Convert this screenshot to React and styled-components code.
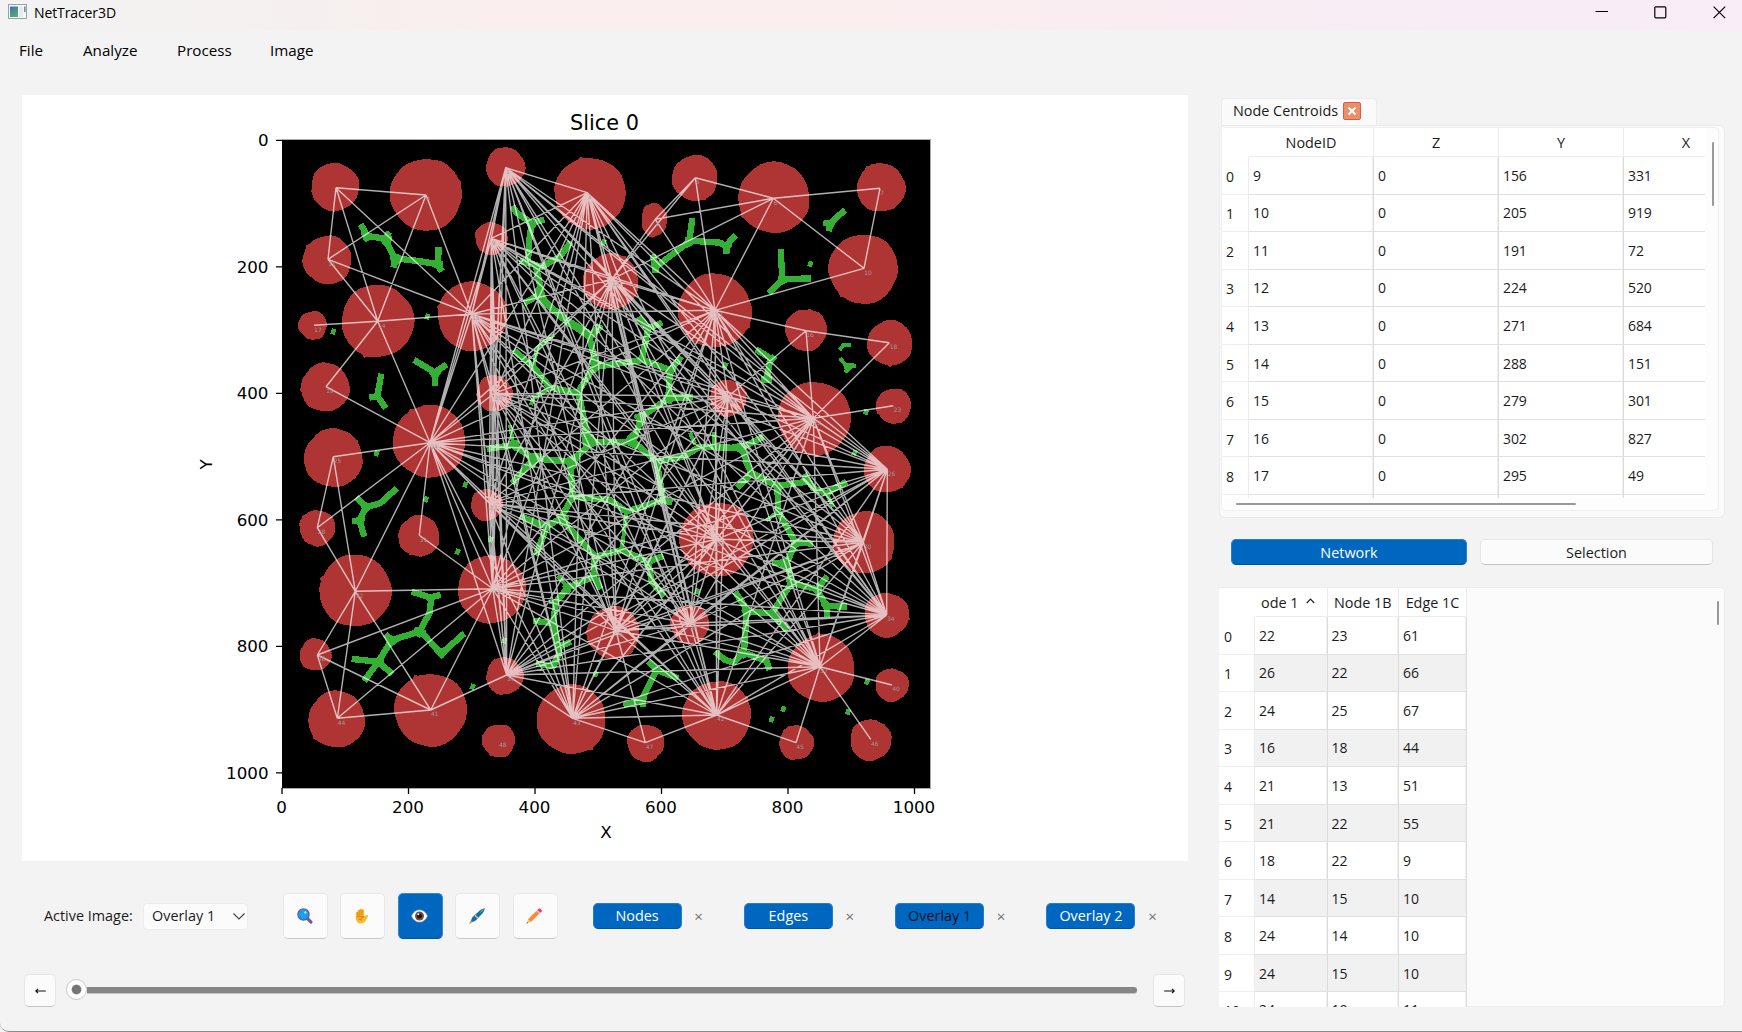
import React from "react";
import styled, { createGlobalStyle } from "styled-components";

const GlobalStyle = createGlobalStyle`
  html, body { margin: 0; padding: 0; background: #f3f3f3; }
  * { box-sizing: border-box; }
`;

/* ---------- window chrome ---------- */

const Window = styled.div`
  width: 1742px;
  height: 1032px;
  overflow: hidden;
  display: flex;
  flex-direction: column;
  background: #f3f3f3;
  border-bottom: 1px solid #8a8a8a;
  border-bottom-left-radius: 9px;
  color: #1b1b1b;
  font-family: "Open Sans", "Noto Sans", sans-serif;
  font-size: 14.4px;
  line-height: 20px;
  white-space: nowrap;
`;

const TitleBar = styled.header`
  height: 31px;
  flex: none;
  display: flex;
  align-items: flex-start;
  padding: 3px 16px 0 8px;
  background: linear-gradient(90deg, #f3f3f3 0%, #f5f0ef 18%, #fbeeee 30%, #faeeef 50%, #f8ecf6 85%, #f7eef7 100%);
`;

const AppTitle = styled.h1`
  margin: 0 auto 0 7px;
  font-size: 14px;
  line-height: 19px;
  letter-spacing: -0.1px;
  font-weight: 400;
  color: #000;
`;

const WindowControls = styled.div`
  display: flex;
  gap: 46px;
  padding-top: 3px;
  svg { display: block; }
`;

const MenuBar = styled.nav`
  height: 64px;
  flex: none;
  display: flex;
  padding: 9px 0 0 19px;
  color: #000;
  font-size: 15.2px;
`;

const MenuItem = styled.span`
  width: ${(p) => p.$w}px;
`;

const Body = styled.main`
  display: flex;
  flex: 1;
  min-height: 0;
`;

/* ---------- left column ---------- */

const Left = styled.section`
  width: 1219px;
  flex: none;
  padding-left: 22px;
`;

const Figure = styled.div`
  width: 1166px;
  height: 766px;
  background: #fff;
  svg { display: block; }
`;

const Controls = styled.div`
  display: flex;
  align-items: center;
  height: 46px;
  margin-top: 32px;
  padding-left: 22px;
`;

const Label = styled.label`
  width: 99px;
`;

const Select = styled.div`
  width: 105px;
  height: 27px;
  display: flex;
  align-items: center;
  justify-content: space-between;
  padding: 0 1px 0 8px;
  background: #fbfbfb;
  border: 1px solid #ececec;
  border-radius: 4px;
`;

const Tools = styled.div`
  display: flex;
  gap: 12.4px;
  margin: 0 35px 0 35px;
`;

const ToolButton = styled.button`
  width: 45px;
  height: 46px;
  padding: 0 1px 0 0;
  display: flex;
  align-items: center;
  justify-content: center;
  border-radius: 5px;
  border: 1px solid ${(p) => (p.$active ? "#3a86cc" : "#e8e8e8")};
  border-bottom-color: ${(p) => (p.$active ? "#00539f" : "#c9c9c9")};
  background: ${(p) => (p.$active ? "#0067c0" : "#fbfbfb")};
`;

const Channels = styled.div`
  display: flex;
`;

const Channel = styled.div`
  display: flex;
  align-items: center;
  width: 151.3px;
`;

const ChannelButton = styled.button`
  width: 89px;
  height: 26px;
  padding: 0;
  border: 1px solid #2a7cc8;
  border-bottom-color: #00539f;
  border-radius: 5px;
  background: #0067c0;
  color: ${(p) => (p.$dark ? "#0a1420" : "#fff")};
  font: inherit;
`;

const CloseGlyph = styled.span`
  width: 34px;
  text-align: center;
  font-size: 15px;
  color: #707070;
`;

const SliderRow = styled.div`
  display: flex;
  align-items: center;
  height: 34px;
  margin-top: 34px;
  padding-left: 2px;
`;

const StepButton = styled.button`
  width: 32px;
  height: 33px;
  padding: 0;
  display: flex;
  align-items: center;
  justify-content: center;
  border: 1px solid #e6e6e6;
  border-bottom-color: #c2c2c2;
  border-radius: 5px;
  background: #fbfbfb;
`;

const Slider = styled.div`
  display: flex;
  align-items: center;
  width: 1071px;
  margin: 0 16px 1px 10px;
`;

const Handle = styled.div`
  width: 21px;
  height: 21px;
  flex: none;
  border-radius: 50%;
  border: 1px solid #c9c9c9;
  background: radial-gradient(circle, #767676 0 4.2px, #fff 5.4px);
`;

const Track = styled.div`
  flex: 1;
  height: 6px;
  border-radius: 0 3px 3px 0;
  background: #868686;
  box-shadow: 0 1px 0 #c4c4c4;
`;

/* ---------- right column ---------- */

const Right = styled.section`
  width: 506px;
  padding-top: 3px;
  flex: none;
`;

const Tab = styled.div`
  width: 156px;
  height: 27px;
  margin-left: 2px;
  display: flex;
  align-items: center;
  justify-content: space-between;
  padding: 0 15px 3px 11px;
  border: 1px solid #ececec;
  border-bottom: 0;
  border-radius: 4px 4px 0 0;
  background: #fafafa;
`;

const TabClose = styled.button`
  width: 18px;
  height: 18px;
  padding: 0;
  display: flex;
  align-items: center;
  justify-content: center;
  border: 1px solid #e2574c;
  border-radius: 2px;
  background: #ea8f66;
`;

const CentroidPanel = styled.div`
  height: 393px;
  padding: 1px 5px 6px 1px;
  border: 1px solid #ebebeb;
  border-radius: 6px;
  background: #fafafa;
`;

const CentroidFrame = styled.div`
  height: 384px;
  display: grid;
  grid-template-columns: 484px 1fr;
  grid-template-rows: 370px 1fr;
  border: 1px solid #efefef;
  border-radius: 4px;
  background: #fdfdfd;
`;

const Table = styled.div`
  width: ${(p) => p.$w}px;
  height: ${(p) => p.$h}px;
  overflow: hidden;
  background: #fff;
`;

const Row = styled.div`
  display: grid;
  grid-template-columns: ${(p) => p.$cols};
  height: ${(p) => (p.$header ? 29 : 37.55)}px;
  flex: none;
`;

const HeadCell = styled.div`
  display: flex;
  align-items: center;
  justify-content: ${(p) => (p.$start ? "flex-start" : "center")};
  padding: 1px 0 0 ${(p) => p.$pad || 0}px;
  border-right: 1px solid ${(p) => (p.$corner ? "transparent" : "#ececec")};
  border-bottom: 1px solid ${(p) => (p.$corner ? "transparent" : "#ececec")};
  svg { margin: 0 0 4px 7px; }
`;

const IndexCell = styled.div`
  display: flex;
  align-items: center;
  padding: ${(p) => (p.$cut ? 0 : 3)}px 0 0 ${(p) => p.$pad}px;
  font-size: 14px;
  border-right: 1px solid #ececec;
  border-bottom: 1px solid #efefef;
`;

const Cell = styled.div`
  display: flex;
  align-items: center;
  padding: ${(p) => (p.$cut ? 0 : 1)}px 0 ${(p) => (p.$cut ? 1 : 0)}px 4px;
  font-size: 14px;
  letter-spacing: -0.1px;
  background: ${(p) => (p.$alt ? "#f1f1f1" : "#fff")};
  border-right: 1px solid #dcdcdc;
  border-bottom: 1px solid #e0e0e0;
  box-shadow: inset -1px 0 0 #f0f0f0;
`;

const VScroll = styled.div`
  width: 2px;
  height: ${(p) => p.$h}px;
  margin: ${(p) => p.$m};
  border-radius: 1px;
  background: #999;
`;

const HScroll = styled.div`
  width: 340px;
  height: 2px;
  margin: 5px 0 0 14px;
  border-radius: 1px;
  background: #999;
`;

const Switch = styled.div`
  display: flex;
  gap: 13px;
  margin: 21px 0 22px 12px;
`;

const SwitchButton = styled.button`
  width: ${(p) => (p.$active ? 236 : 233)}px;
  height: 26px;
  padding: 1px 0 0;
  font: inherit;
  border-radius: 5px;
  border: 1px solid ${(p) => (p.$active ? "#2a7cc8" : "#e6e6e6")};
  border-bottom-color: ${(p) => (p.$active ? "#00539f" : "#c4c4c4")};
  background: ${(p) => (p.$active ? "#0067c0" : "#fbfbfb")};
  color: ${(p) => (p.$active ? "#fff" : "#1b1b1b")};
`;

const NetworkPanel = styled.div`
  height: 420px;
  display: flex;
  justify-content: space-between;
  border: 1px solid #ececec;
  border-left: 0;
  border-radius: 0 5px 5px 0;
  background: #fbfbfb;
`;

/* ---------- plot data ---------- */

// The plot is digitised in four quadrants, each at a third of a pixel
const A = (x, y) => [270 + x / 3, 130 + y / 3];
const B = (x, y) => [600 + x / 3, 130 + y / 3];
const C = (x, y) => [270 + x / 3, 460 + y / 3];
const D = (x, y) => [600 + x / 3, 460 + y / 3];

// id: [hub position, disc centre, disc radius in thirds of a pixel]
const NODES = {
  1: [A(707, 113), A(706, 111), 58],
  2: [A(198, 173), A(195, 171), 71],
  3: [A(952, 188), A(960, 190), 106],
  4: [A(468, 195), A(468, 194), 107],
  5: [B(286, 143), B(285, 144), 68],
  6: [B(520, 205), B(522, 203), 106],
  7: [B(840, 175), B(843, 173), 72],
  8: [B(166, 268), B(162, 270), 43],
  9: [A(664, 325), A(664, 325), 48],
  10: [B(792, 415), B(790, 417), 103],
  11: [A(174, 388), A(172, 390), 72],
  12: [A(1025, 448), A(1022, 455), 83],
  13: [B(345, 541), B(344, 542), 110],
  14: [A(323, 574), A(323, 573), 108],
  15: [A(605, 552), A(607, 558), 103],
  16: [B(618, 602), B(618, 600), 62],
  17: [A(132, 586), A(128, 586), 42],
  18: [B(868, 638), B(870, 639), 67],
  19: [A(168, 770), A(166, 772), 72],
  20: [A(673, 790), A(673, 790), 53],
  21: [B(384, 800), B(384, 804), 54],
  22: [B(640, 865), B(643, 865), 109],
  23: [B(880, 827), B(881, 828), 52],
  24: [A(480, 938), A(478, 934), 108],
  25: [A(190, 980), A(190, 984), 87],
  26: [D(862, 28), D(861, 28), 69],
  27: [C(658, 130), C(650, 135), 47],
  28: [C(142, 203), C(142, 204), 53],
  29: [D(350, 238), D(350, 238), 110],
  30: [D(790, 247), D(792, 247), 92],
  31: [C(448, 226), C(447, 228), 61],
  32: [C(256, 394), C(256, 392), 107],
  33: [C(668, 386), C(665, 388), 101],
  34: [D(860, 465), D(860, 465), 66],
  35: [D(270, 490), D(270, 494), 57],
  36: [D(48, 512), D(40, 518), 78],
  37: [D(660, 620), D(664, 625), 100],
  38: [C(142, 585), C(136, 584), 47],
  39: [C(710, 645), C(704, 648), 55],
  40: [D(876, 675), D(876, 675), 49],
  41: [C(482, 750), C(482, 750), 108],
  42: [D(350, 765), D(351, 766), 102],
  43: [C(908, 775), C(904, 778), 103],
  44: [C(202, 775), C(200, 778), 84],
  45: [D(588, 848), D(589, 848), 51],
  46: [D(812, 838), D(812, 840), 61],
  47: [D(136, 848), D(137, 849), 55],
  48: [C(686, 842), C(686, 842), 49],
};

const CORE = [1, 3, 9, 12, 13, 15, 20, 21, 22, 24, 26, 27, 29, 30, 33, 34, 35, 36, 37, 39, 42, 43];

const OUTER = [
  [2, 4], [2, 11], [2, 14], [2, 15], [4, 11], [4, 14], [4, 15], [11, 14], [11, 15], [14, 17], [14, 15],
  [14, 19], [14, 24], [19, 24], [24, 25], [25, 28], [25, 32], [24, 28], [28, 32], [24, 32], [24, 31],
  [31, 33], [32, 33], [32, 38], [32, 41], [32, 44], [38, 44], [38, 41], [33, 38], [33, 44], [33, 41],
  [41, 44], [39, 41], [43, 47], [42, 47], [36, 47], [42, 45], [37, 45], [37, 46], [37, 40], [5, 6],
  [5, 8], [5, 13], [5, 12], [6, 8], [6, 12], [6, 13], [6, 10], [6, 7], [7, 10], [8, 13], [8, 12],
  [10, 13], [13, 16], [16, 18], [18, 22], [16, 22], [16, 21], [22, 23],
];

const seg = ([a, b]) => {
  const [p, q] = [NODES[a][0], NODES[b][0]];
  return `M${p[0].toFixed(1)},${p[1].toFixed(1)}L${q[0].toFixed(1)},${q[1].toFixed(1)}`;
};

const CORE_EDGES = CORE.flatMap((a, i) => CORE.slice(i + 1).map((b) => [a, b]));
const EDGE_PATH = [...OUTER, ...CORE_EDGES].map(seg).join("");

// Slightly irregular outline with a single small nub, like a segmented blob
const blob = (id, [cx, cy], r3) => {
  const r = r3 / 3;
  const n = 72;
  const nub = (id * 17) % n;
  const pts = [];
  for (let i = 0; i < n; i++) {
    const t = (i / n) * Math.PI * 2;
    let k = r + 0.3 + 0.5 * Math.sin(t * 3 + id) + 0.3 * Math.sin(t * 6 + id * 2) + 0.12 * Math.sin(t * 11 + id * 5);
    if (i === nub) k += r * 0.06;
    const squash = id === 8 ? [0.88, 1.16] : [1, 1];
    pts.push(`${(cx + k * Math.cos(t) * squash[0]).toFixed(1)},${(cy + k * Math.sin(t) * squash[1]).toFixed(1)}`);
  }
  return pts.join(" ");
};

const GREEN = [
  {
    at: [270, 130],
    wide:
      "M272,283L292,318L345,326L358,306M345,326L376,390L370,412M376,385L445,393L500,402L516,424M504,405L506,350M726,228L740,248L785,280L823,268M785,280L778,330L774,395M748,392L815,410L870,380L903,335M798,410L815,490L762,520M805,500L890,570L965,615L993,587M432,690L495,728L495,768M493,728L530,703M334,731L322,798L298,803M320,795L347,835",
    fat: "M280,308L300,322L288,328ZM335,325L360,325L350,345ZM368,375L395,385L370,405ZM485,400L512,400L512,415ZM485,728L505,728L495,742ZM775,275L795,278L785,295ZM800,480L815,505L835,520Z",
    dots: [[190, 605], [472, 560], [320, 970], [1001, 337]],
  },
  {
    at: [600, 130],
    wide:
      "M277,264L268,332L360,338L378,348L407,315M378,345L380,371M268,335L168,410L158,373M166,400L166,428M735,240L690,280L670,278M690,280L687,304M542,358L547,448L633,445M550,446L506,490M468,658L512,685L498,755M525,678L505,700M484,748L515,748M300,950L420,955L490,920M425,955L450,1020",
    thin: "M718,660L730,646L752,646M720,684L742,712L768,707M744,706L738,728M270,908L285,942M343,905L343,945",
    fat: "M262,328L280,335L262,345ZM368,345L390,345L380,358ZM160,402L178,405L166,418ZM680,280L698,280L688,295ZM540,445L560,450L540,460ZM400,950L430,945L430,965ZM738,705L755,705L742,718Z",
    dots: [[631, 402], [375, 705], [798, 846], [764, 968], [0, 593]],
  },
  {
    at: [470, 300],
    wide:
      "M215,0L290,65L360,110L390,75M356,105L378,190L325,275L350,400L375,425L490,425L515,350L595,295L600,210L635,170M595,293L668,292M600,210L520,180L380,200M515,180L535,85L505,50M535,85L577,68M130,150L190,200L240,262L325,280M50,447L130,435L190,475L300,485L370,425M190,478L125,550M300,475L308,590L420,600L470,635L580,600L607,608M490,425L560,485L580,600M555,485L640,470L690,440L780,440M308,590L272,655L230,680L198,766M230,680L150,648M272,655L375,770L455,750M455,750L535,785L580,768M535,785L545,845L583,888M375,770L370,830L295,862L258,905M372,830L392,868M258,900L250,970L190,962M250,970L258,1020",
    thin:
      "M190,210L200,145L250,105M240,265L190,295L183,316M130,435L120,375M470,635L455,750M295,862L262,828M258,905L236,905",
    fat: "M340,400L378,428L348,442ZM468,425L490,402L499,440ZM288,482L325,465L310,500ZM180,465L208,465L188,498ZM500,350L525,340L515,370ZM590,290L612,285L600,305ZM590,205L612,205L600,225ZM265,650L290,655L275,670ZM525,780L545,780L535,800ZM285,860L300,855L295,872ZM120,430L140,428L135,445ZM365,185L390,190L375,210Z",
    dots: [[62, 718], [683, 874], [766, 196]],
  },
  {
    at: [270, 460],
    wide:
      "M380,85L330,130L288,142L258,112M288,140L268,182L245,182M268,180L283,230M425,395L480,412L512,405M485,410L478,460L448,515L365,540L346,522M448,512L515,580L583,520M368,535L325,605L245,597M325,605L282,663M320,600L367,643M850,480L868,580L850,618L798,610M868,560L903,545",
    fat: "M278,130L298,138L285,152ZM262,178L278,178L270,190ZM472,408L492,408L482,422ZM440,508L460,515L448,525ZM500,572L528,572L515,588ZM355,535L380,540L360,555ZM312,600L336,600L322,615Z",
    dots: [[468, 118], [586, 74], [563, 275], [608, 680], [703, 542], [977, 642]],
  },
  {
    at: [600, 460],
    wide:
      "M435,0L455,40L412,84M455,38L530,78L622,65M612,42L640,85L680,100L740,65M532,75L535,155L585,245L640,252M588,245L560,310L515,308M560,300L575,368L650,388L682,348M650,388L680,438L742,440M680,435L680,470M575,368L515,460L445,455L405,395M510,455L562,510M440,455L432,578L400,607L375,600L345,575M432,578L500,603L508,630M145,605L170,630L235,655M168,632L125,720L70,735M128,710L128,742",
    thin: "M535,155L498,182M680,100L700,140",
    fat: "M448,35L465,42L448,50ZM524,72L544,78L534,92ZM578,240L600,248L582,260ZM535,308L562,300L562,325ZM566,362L590,370L572,380ZM640,385L660,385L655,398ZM670,432L692,436L680,448ZM432,452L455,455L440,470ZM422,575L444,580L430,588ZM110,722L134,710L130,732Z",
    dots: [[292, 394], [550, 747], [515, 778], [744, 756], [801, 665]],
  },
];

const TICKS = [0, 200, 400, 600, 800, 1000];
const scale = (v) => (v * 648) / 1024.5;

function Plot() {
  return (
    <svg width="1166" height="766" viewBox="22 95 1166 766">
      <rect x="282" y="139.5" width="648.5" height="649" fill="#000" />
      <path d="M282,139.5H930.5V788.5H282" fill="none" stroke="#aaa" />
      <g fill="#af3434" shapeRendering="crispEdges">
        {Object.entries(NODES).map(([id, n]) => (
          <polygon key={id} points={blob(Number(id), n[1], n[2])} />
        ))}
      </g>
      <g fill="none" stroke="#34b034" shapeRendering="crispEdges" strokeLinejoin="round">
        {GREEN.map((g, i) => (
          <g key={i} transform={`translate(${g.at[0]} ${g.at[1]}) scale(${1 / 3})`}>
            <path d={g.wide} strokeWidth="19" />
            {g.thin && <path d={g.thin} strokeWidth="12" />}
            {g.fat && <path d={g.fat} strokeWidth="15" fill="#34b034" />}
            {g.dots.map(([x, y], k) => (
              <path key={k} d={`M${x - 3},${y + 8}L${x + 3},${y - 8}`} strokeWidth="14" />
            ))}
          </g>
        ))}
      </g>
      <path d={EDGE_PATH} stroke="#fff" strokeWidth="1.4" opacity="0.69" fill="none" />
      <g fill="#a09a9a" fontFamily="'DejaVu Sans', sans-serif" fontSize="6">
        {Object.entries(NODES).map(([id, n]) => (
          <text key={id} x={n[0][0] + 0.3} y={n[0][1] + 6.2}>
            {id}
          </text>
        ))}
      </g>
      <g stroke="#000" strokeWidth="1.3">
        {TICKS.map((t) => (
          <path key={t} d={`M${282 + scale(t)},788v6M282,${140.4 + scale(t)}h-6`} />
        ))}
      </g>
      <g fill="#000" fontFamily="'DejaVu Sans', sans-serif" fontSize="16.7">
        {TICKS.map((t) => (
          <React.Fragment key={t}>
            <text x={281.5 + scale(t)} y="813" textAnchor="middle">
              {t}
            </text>
            <text x="268.5" y={146 + scale(t)} textAnchor="end">
              {t}
            </text>
          </React.Fragment>
        ))}
        <text x="606" y="838" textAnchor="middle">
          X
        </text>
        <text transform="translate(212 464.5) rotate(-90)" textAnchor="middle">
          Y
        </text>
        <text x="604.5" y="130" textAnchor="middle" fontSize="20.8">
          Slice 0
        </text>
      </g>
    </svg>
  );
}

/* ---------- icons ---------- */

const AppIcon = () => (
  <svg width="19" height="16" viewBox="0 0 19 16">
    <defs>
      <linearGradient id="pane" x1="0" y1="0" x2="0.6" y2="1">
        <stop offset="0" stopColor="#3f74a8" />
        <stop offset="1" stopColor="#55a877" />
      </linearGradient>
    </defs>
    <rect x="0.5" y="1.5" width="18" height="14" fill="#f6f8f9" stroke="#9aa0a8" />
    <rect x="2" y="3.5" width="8" height="10.5" fill="url(#pane)" />
    <rect x="11" y="3.5" width="4" height="10.5" fill="#e6eaec" />
    <rect x="16" y="3.5" width="1.6" height="5.5" fill="#5b9aa6" />
  </svg>
);

const Magnifier = () => (
  <svg width="16" height="16" viewBox="0 0 16 16">
    <path d="M9.6 9.6l4.3 4.4" stroke="#6a57a0" strokeWidth="3.2" strokeLinecap="round" />
    <circle cx="6.5" cy="6.5" r="5.6" fill="#11a3ee" stroke="#6a57a0" strokeWidth="1.3" />
    <circle cx="8.4" cy="4.5" r="1.2" fill="#a9e2ff" />
  </svg>
);

const Hand = () => (
  <svg width="16" height="16" viewBox="0 0 16 16">
    <path
      d="M1.8 6V4.4Q2.6 3 3.7 4.2V2.2Q4.8.8 5.9 2V1Q7 0 8 1V1.6Q9.2.6 10.2 1.9V8.3L12.3 7.2Q14 6.8 14.2 8L11.5 13Q9.8 15.6 7.2 15.6Q1.9 15.6 1.8 10Z"
      fill="#fcb92c"
    />
    <path d="M3.8 3.8v4.2M5.9 2v5.6M8 2v5.6M2.6 8.7h7.3Q7 9.6 6.3 12.2M4.5 11.2q2-.2 3.2 1.2" fill="none" stroke="#cf7a12" strokeWidth=".9" />
  </svg>
);

const Eye = () => (
  <svg width="17" height="16" viewBox="0 0 17 16">
    <path d="M.6 8Q3.4 2 8.5 2T16.4 8Q13.6 14 8.5 14T.6 8Z" fill="#fff" stroke="#c9c5c9" strokeWidth=".6" />
    <circle cx="8.5" cy="8" r="4.5" fill="#7b4a3f" />
    <circle cx="8.5" cy="8" r="2.5" fill="#1d1418" />
    <circle cx="7.3" cy="6.2" r="1" fill="#fff" />
  </svg>
);

const Pen = () => (
  <svg width="16" height="16" viewBox="0 0 16 16">
    <path d="M.6 15.4L3.4 9.2 11 2.3Q14.4-.2 15.6.6 16 2 13.6 5.2L6.8 12.6Z" fill="#0b72b9" />
    <path d="M5.9 7.2l3 3" stroke="#f6c13a" strokeWidth="1.5" />
    <path d="M.5 15.5l2.6-2.4" stroke="#e4a62c" strokeWidth="1.1" />
    <path d="M11.3 4.2l3.3-2.7" stroke="#f6c13a" strokeWidth=".8" />
  </svg>
);

const Pencil = () => (
  <svg width="17" height="16" viewBox="0 0 17 16">
    <path d="M.6 15.4L2 11.2 4.9 14Z" fill="#e9c58f" />
    <path d="M2 11.2L10.6 2.7 13.5 5.5 4.9 14Z" fill="#fd8a33" />
    <path d="M10.2 3.1L11.4 1.9 14.3 4.7 13.1 5.9Z" fill="#cfc9cf" />
    <path d="M11.4 1.9L12.6.7Q13.5.1 14.3.8L15.6 2Q16.3 2.9 15.6 3.6L14.3 4.7Z" fill="#f8316b" />
    <path d="M.5 15.5l.6-1.6 1 1Z" fill="#444" />
  </svg>
);

const Arrow = ({ flip }) => (
  <svg width="11" height="8" viewBox="0 0 11 8" transform={flip ? "scale(-1 1)" : undefined}>
    <path d="M.8 5h10M3 2.8L.8 5 3 7.2" fill="none" stroke="#111" strokeWidth="1.15" />
  </svg>
);

/* ---------- tables ---------- */

const CENTROIDS = [
  [9, 0, 156, 331],
  [10, 0, 205, 919],
  [11, 0, 191, 72],
  [12, 0, 224, 520],
  [13, 0, 271, 684],
  [14, 0, 288, 151],
  [15, 0, 279, 301],
  [16, 0, 302, 827],
  [17, 0, 295, 49],
  ["", "", "", ""],
];

const NETWORK = [
  [22, 23, 61],
  [26, 22, 66],
  [24, 25, 67],
  [16, 18, 44],
  [21, 13, 51],
  [21, 22, 55],
  [18, 22, 9],
  [14, 15, 10],
  [24, 14, 10],
  [24, 15, 10],
  [24, 19, 11],
];

const COLS_A = "27px 125px 125px 125px 125px";
const COLS_B = "36px 72.5px 71.5px 68px";

const TOOLS = [
  { name: "zoom", icon: <Magnifier /> },
  { name: "pan", icon: <Hand /> },
  { name: "view", icon: <Eye />, active: true },
  { name: "brush", icon: <Pen /> },
  { name: "edit", icon: <Pencil /> },
];

const MENU = [["File", 64], ["Analyze", 94], ["Process", 93], ["Image", 60]];

export default function App() {
  return (
    <>
      <GlobalStyle />
      <Window>
        <TitleBar>
          <AppIcon />
          <AppTitle>NetTracer3D</AppTitle>
          <WindowControls>
            <svg width="13" height="13">
              <path d="M.5 5.5h12.5" stroke="#000" />
            </svg>
            <svg width="13" height="13">
              <rect x=".8" y=".8" width="11" height="11" rx="1" fill="none" stroke="#000" strokeWidth="1.2" />
            </svg>
            <svg width="13" height="13">
              <path d="M.6 .6l11.6 11.6M12.2 .6L.6 12.2" stroke="#000" strokeWidth="1.2" />
            </svg>
          </WindowControls>
        </TitleBar>
        <MenuBar>
          {MENU.map(([name, w]) => (
            <MenuItem key={name} $w={w}>
              {name}
            </MenuItem>
          ))}
        </MenuBar>
        <Body>
          <Left>
            <Figure>
              <Plot />
            </Figure>
            <Controls>
              <Label>Active Image:</Label>
              <Select>
                Overlay 1
                <svg width="14" height="9" viewBox="0 0 14 9">
                  <path d="M1.5 1.5L7 7l5.5-5.5" fill="none" stroke="#444" strokeWidth="1.2" />
                </svg>
              </Select>
              <Tools>
                {TOOLS.map((t) => (
                  <ToolButton key={t.name} $active={t.active}>
                    {t.icon}
                  </ToolButton>
                ))}
              </Tools>
              <Channels>
                {["Nodes", "Edges", "Overlay 1", "Overlay 2"].map((c) => (
                  <Channel key={c}>
                    <ChannelButton $dark={c === "Overlay 1"}>{c}</ChannelButton>
                    <CloseGlyph>×</CloseGlyph>
                  </Channel>
                ))}
              </Channels>
            </Controls>
            <SliderRow>
              <StepButton>
                <Arrow />
              </StepButton>
              <Slider>
                <Handle />
                <Track />
              </Slider>
              <StepButton>
                <Arrow flip />
              </StepButton>
            </SliderRow>
          </Left>
          <Right>
            <Tab>
              Node Centroids
              <TabClose>
                <svg width="10" height="10">
                  <path d="M1.5 1.5l7 7M8.5 1.5l-7 7" stroke="#fff" strokeWidth="2" />
                </svg>
              </TabClose>
            </Tab>
            <CentroidPanel>
              <CentroidFrame>
                <Table $w={483} $h={370}>
                  <Row $cols={COLS_A} $header>
                    <HeadCell $corner />
                    {["NodeID", "Z", "Y", "X"].map((h) => (
                      <HeadCell key={h}>{h}</HeadCell>
                    ))}
                  </Row>
                  {CENTROIDS.map((r, i) => (
                    <Row key={i} $cols={COLS_A}>
                      <IndexCell $pad={4}>{i < 9 ? i : ""}</IndexCell>
                      {r.map((v, k) => (
                        <Cell key={k}>{v}</Cell>
                      ))}
                    </Row>
                  ))}
                </Table>
                <VScroll $h={64} $m="14px 0 0 6px" />
                <HScroll />
              </CentroidFrame>
            </CentroidPanel>
            <Switch>
              <SwitchButton $active>Network</SwitchButton>
              <SwitchButton>Selection</SwitchButton>
            </Switch>
            <NetworkPanel>
              <Table $w={248} $h={419}>
                <Row $cols={COLS_B} $header>
                  <HeadCell $corner />
                  <HeadCell $start $pad={6}>
                    ode 1
                    <svg width="9" height="6">
                      <path d="M.8 5L4.5 1.2 8.2 5" fill="none" stroke="#222" strokeWidth="1.2" />
                    </svg>
                  </HeadCell>
                  <HeadCell>Node 1B</HeadCell>
                  <HeadCell>Edge 1C</HeadCell>
                </Row>
                {NETWORK.map((r, i) => (
                  <Row key={i} $cols={COLS_B}>
                    <IndexCell $pad={5} $cut={i === 10}>
                      {i}
                    </IndexCell>
                    {r.map((v, k) => (
                      <Cell key={k} $alt={i % 2 === 1} $cut={i === 10}>
                        {v}
                      </Cell>
                    ))}
                  </Row>
                ))}
              </Table>
              <VScroll $h={24} $m="13px 5px 0 0" />
            </NetworkPanel>
          </Right>
        </Body>
      </Window>
    </>
  );
}
